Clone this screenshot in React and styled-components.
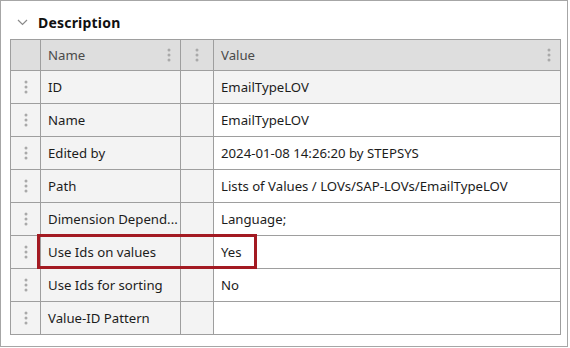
import React from 'react';
import styled, { createGlobalStyle } from 'styled-components';

const GlobalStyle = createGlobalStyle`
  html, body {
    margin: 0;
    padding: 0;
    background: #ffffff;
    font-family: "Noto Sans", "Open Sans", sans-serif;
  }
`;

const rows = [
    { name: 'ID', value: 'EmailTypeLOV', readOnly: true },
    { name: 'Name', value: 'EmailTypeLOV' },
    { name: 'Edited by', value: '2024-01-08 14:26:20 by STEPSYS' },
    { name: 'Path', value: 'Lists of Values / LOVs/SAP-LOVs/EmailTypeLOV' },
    { name: 'Dimension Depend...', value: 'Language;' },
    { name: 'Use Ids on values', value: 'Yes', marked: true },
    { name: 'Use Ids for sorting', value: 'No' },
    { name: 'Value-ID Pattern', value: '' },
];

function Dots() {
    return (
        <svg width="4" height="14" viewBox="0 0 4 14">
            <circle cx="2" cy="2" r="1.5" fill="#a9a9a9" />
            <circle cx="2" cy="7" r="1.5" fill="#a9a9a9" />
            <circle cx="2" cy="12" r="1.5" fill="#a9a9a9" />
        </svg>
    );
}

export default function App() {
    return (
        <>
            <GlobalStyle />
            <Panel>
                <Header>
                    <svg width="11" height="7" viewBox="0 0 11 7">
                        <path d="M1 1 L5.5 5.5 L10 1" fill="none" stroke="#8a8a8a" strokeWidth="1.2" />
                    </svg>
                    <Title>Description</Title>
                </Header>
                <Grid>
                    <HeadCell />
                    <HeadCell>
                        <span>Name</span>
                        <Dots />
                    </HeadCell>
                    <HeadCell $center>
                        <Dots />
                    </HeadCell>
                    <HeadCell>
                        <span>Value</span>
                        <Dots />
                    </HeadCell>
                    {rows.map((r) => (
                        <React.Fragment key={r.name}>
                            <Cell $center>
                                <Dots />
                            </Cell>
                            <Cell>{r.name}</Cell>
                            <Cell />
                            <Cell $white={!r.readOnly}>{r.value}</Cell>
                        </React.Fragment>
                    ))}
                    <Marker />
                </Grid>
            </Panel>
        </>
    );
}

const Panel = styled.div`
    box-sizing: border-box;
    width: 568px;
    height: 347px;
    border: 1px solid #a6a6a6;
    padding: 0 6px 0 9px;
`;

const Header = styled.div`
    display: flex;
    align-items: center;
    gap: 10px;
    height: 38px;
    padding-left: 7px;
    padding-top: 5px;
    box-sizing: border-box;
`;

const Title = styled.span`
    font-size: 14px;
    font-weight: 700;
    color: #111;
    letter-spacing: 0.2px;
`;

const Grid = styled.div`
    position: relative;
    display: grid;
    grid-template-columns: 30px 140px 33px 347px;
    grid-template-rows: 31px repeat(8, 33px);
    border-left: 1px solid #9e9e9e;
    border-top: 1px solid #9e9e9e;
`;

const Cell = styled.div`
    box-sizing: border-box;
    display: flex;
    align-items: center;
    justify-content: ${(p) => (p.$center ? 'center' : 'flex-start')};
    padding: ${(p) => (p.$center ? '0' : '0 0 1px 7px')};
    border-right: 1px solid #9e9e9e;
    border-bottom: 1px solid #9e9e9e;
    background: ${(p) => (p.$white ? '#ffffff' : '#f3f3f3')};
    font-size: 13.2px;
    color: #1c1c1c;
    white-space: nowrap;
    overflow: hidden;
`;

const HeadCell = styled(Cell)`
    background: #dedede;
    color: #4a4a4a;
    justify-content: ${(p) => (p.$center ? 'center' : 'space-between')};
    padding: ${(p) => (p.$center ? '0' : '0 9px 1px 7px')};
`;

const Marker = styled.div`
    position: absolute;
    left: 26px;
    top: 194px;
    width: 220px;
    height: 35px;
    box-sizing: border-box;
    border: 3px solid #a31a22;
    pointer-events: none;
`;
